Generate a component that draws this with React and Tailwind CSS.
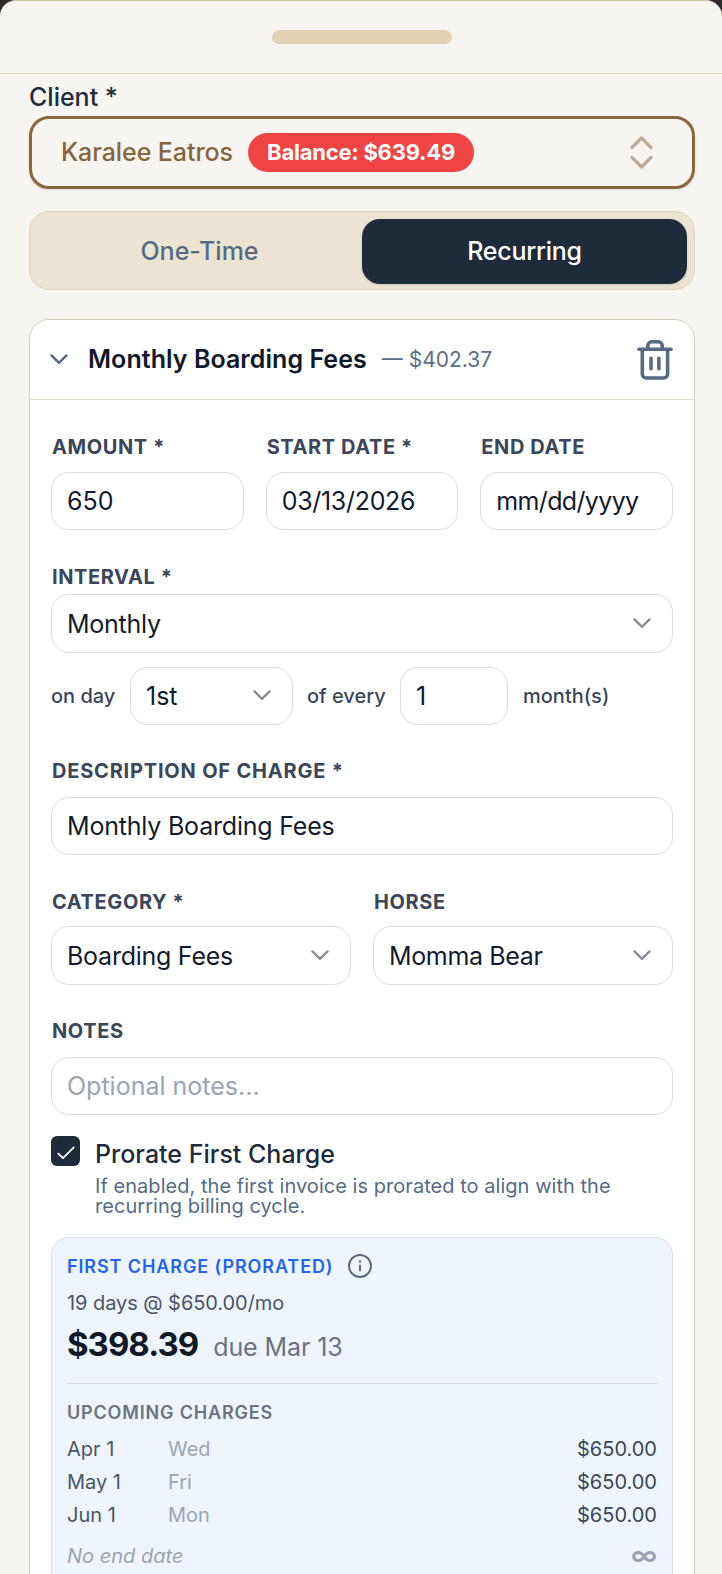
import React from 'react';

const upcoming = [
  { date: 'Apr 1', day: 'Wed', amount: '$650.00' },
  { date: 'May 1', day: 'Fri', amount: '$650.00' },
  { date: 'Jun 1', day: 'Mon', amount: '$650.00' },
];

const Chevron = ({ className = 'text-[#8a8f9b]' }) => (
  <svg width="18" height="12" viewBox="0 0 18 12" fill="none" stroke="currentColor" strokeWidth="2.4" strokeLinecap="round" strokeLinejoin="round" className={className}>
    <path d="M1.5 1.4 9 8.9l7.5-7.5" />
  </svg>
);

const Label = ({ children, className = 'tracking-[0.03em]' }) => (
  <div className={`h-[30px] whitespace-nowrap pl-px text-[20px] font-bold uppercase leading-[30px] text-[#3b4659] ${className}`}>
    {children}
  </div>
);

const Field = ({ children, select = false, className = '' }) => (
  <div className={`flex items-center justify-between rounded-[18px] border border-[#dcdde3] bg-white pl-[15px] pr-[21px] text-[25px] text-[#131b2c] ${className}`}>
    <span className="whitespace-nowrap pt-[2px]">{children}</span>
    {select && <Chevron />}
  </div>
);

const ClientSelect = () => (
  <div className="flex h-[73px] items-center rounded-[20px] border-[3px] border-[#89673c] pl-[29px] pr-[39px] shadow-sm">
    <span className="w-[171px] whitespace-nowrap pt-px text-[25px] font-[550] tracking-[-0.003em] text-[#86653a]">Karalee Eatros</span>
    <span className="ml-[16px] flex h-[39px] w-[226px] items-center justify-center whitespace-nowrap rounded-full bg-[#ef4444] text-[22px] font-bold tracking-[-0.01em] text-white">
      Balance: $639.49
    </span>
    <svg width="24" height="34" viewBox="0 0 24 34" fill="none" stroke="#c0ac95" strokeWidth="3.2" strokeLinecap="round" strokeLinejoin="round" className="ml-auto">
      <path d="M3 11.5l9.5-9.5 9.5 9.5M3 21.5l9.5 9.5 9.5-9.5" />
    </svg>
  </div>
);

const TypeToggle = () => (
  <div className="mt-[22px] flex h-[79px] rounded-[20px] border border-[#dfd3bc] bg-[#ebe4d3] p-[7px] text-[25px] font-[550]">
    <div className="flex w-[325px] items-center justify-center pt-[2px] text-[#566b82]">One-Time</div>
    <div className="flex h-[65px] flex-1 items-center justify-center rounded-[18px] bg-[#1f2b3b] pt-px tracking-[-0.01em] text-white shadow-sm">Recurring</div>
  </div>
);

const ChargeHeader = () => (
  <div className="flex h-[80px] items-center border-b border-[#e3dcc9] pl-[20px] pr-[21px]">
    <Chevron className="text-[#566b82]" />
    <span className="ml-[20px] whitespace-nowrap text-[25px] font-semibold tracking-[0.002em] text-[#111829]">Monthly Boarding Fees</span>
    <span className="ml-[15px] whitespace-nowrap text-[21px] text-[#5b6e85]">— $402.37</span>
    <svg width="36" height="40" viewBox="0 0 36 40" fill="none" stroke="#566b82" strokeWidth="3.6" strokeLinecap="round" strokeLinejoin="round" className="ml-auto">
      <path d="M1.9 9.2h32.2M5.3 9.2V34a4 4 0 0 0 4 4h17.3a4 4 0 0 0 4-4V9.2M10.8 8.6V5.8a4 4 0 0 1 4-4h6.4a4 4 0 0 1 4 4v2.8M14 18.3v10.4M21.9 18.3v10.4" />
    </svg>
  </div>
);

const Preview = () => (
  <div className="mt-[21px] h-[400px] rounded-[18px] border border-[#d8dfe9] bg-[#eef5ff] px-[15px]">
    <div className="mt-[13px] flex h-[30px] items-center">
      <span className="whitespace-nowrap text-[18px] font-semibold tracking-[0.05em] text-[#2563eb]">FIRST CHARGE (PRORATED)</span>
      <svg width="24" height="24" viewBox="0 0 24 24" fill="none" stroke="#566b82" strokeWidth="2" strokeLinecap="round" className="ml-[15px]">
        <circle cx="12" cy="12" r="11" />
        <path d="M12 11.5v5" />
        <path d="M12 7.4v.1" strokeWidth="2.4" />
      </svg>
    </div>
    <div className="mt-[7px] h-[30px] whitespace-nowrap text-[20px] leading-[30px] tracking-[-0.003em] text-[#4b5563]">19 days @ $650.00/mo</div>
    <div className="mt-[3px] flex h-[46px] items-baseline">
      <span className="text-[33px] font-bold leading-[46px] tracking-[-0.03em] text-[#111827]">$398.39</span>
      <span className="ml-[15px] text-[25px] tracking-[-0.004em] text-[#6b7280]">due Mar 13</span>
    </div>
    <div className="mt-[16px] border-t border-[#d8dde6]" />
    <div className="mt-[14px] h-[30px] whitespace-nowrap text-[18px] font-semibold leading-[30px] tracking-[0.046em] text-[#6b7280]">UPCOMING CHARGES</div>
    <div className="mt-[4px]">
      {upcoming.map((row) => (
        <div key={row.date} className="flex h-[33px] items-center text-[20px]">
          <span className="w-[101px] text-[#4b5563]">{row.date}</span>
          <span className="text-[#9ca3af]">{row.day}</span>
          <span className="ml-auto text-[#3b4557]">{row.amount}</span>
        </div>
      ))}
    </div>
    <div className="mt-[8px] flex h-[33px] items-center justify-between text-[20px] text-[#9ca3af]">
      <span className="italic">No end date</span>
      <span className="text-[27px] font-semibold leading-[33px]">∞</span>
    </div>
  </div>
);

const App = () => {
  return (
    <div className="h-[1574px] w-[722px] overflow-hidden bg-[#2d2a2b] font-[Inter,sans-serif]">
      <div className="h-full rounded-t-[16px] border-t border-[#d5c6a6] bg-[#f7f5f1]">
        {/* Drag handle */}
        <div className="flex h-[73px] justify-center border-b border-[#d9d1c2] pt-[29px]">
          <div className="ml-[2px] h-[14px] w-[180px] rounded-full bg-[#e2d1b2]" />
        </div>

        <div className="px-[29px]">
          <div className="h-[42px] pt-[4px] text-[25px] font-[550] leading-[38px] text-[#1f2b3b]">Client *</div>
          <div className="w-[666px]">
            <ClientSelect />
            <TypeToggle />

            <div className="mt-[29px] h-[1400px] rounded-[20px] border border-[#d9cfbb] bg-white">
              <ChargeHeader />
              <div className="px-[21px] pt-[32px]">
                <div className="grid grid-cols-3 gap-[22px]">
                  <div>
                    <Label>Amount *</Label>
                    <Field className="mt-[10px] h-[58px]">650</Field>
                  </div>
                  <div>
                    <Label>Start Date *</Label>
                    <Field className="mt-[10px] h-[58px] tracking-[-0.012em]">03/13/2026</Field>
                  </div>
                  <div>
                    <Label>End Date</Label>
                    <Field className="mt-[10px] h-[58px] tracking-[-0.026em]">mm/dd/yyyy</Field>
                  </div>
                </div>

                <Label className="mt-[32px] tracking-[0.03em]">Interval *</Label>
                <Field select className="mt-[2px] h-[59px] tracking-[-0.01em]">Monthly</Field>
                <div className="mt-[14px] flex h-[58px] items-center whitespace-nowrap text-[20px] font-medium text-[#3b4659]">
                  <span className="w-[79px]">on day</span>
                  <Field select className="h-[58px] w-[163px] font-normal">1st</Field>
                  <span className="w-[107px] pl-[14px]">of every</span>
                  <Field className="h-[58px] w-[108px] font-normal">1</Field>
                  <span className="pl-[15px]">month(s)</span>
                </div>

                <Label className="mt-[31px] tracking-[0.04em]">Description of Charge *</Label>
                <Field className="mt-[11px] h-[58px] tracking-[-0.008em]">Monthly Boarding Fees</Field>

                <div className="mt-[32px] grid grid-cols-2 gap-[22px]">
                  <div>
                    <Label>Category *</Label>
                    <Field select className="mt-[9px] h-[59px] tracking-[-0.01em]">Boarding Fees</Field>
                  </div>
                  <div>
                    <Label>Horse</Label>
                    <Field select className="mt-[9px] h-[59px] tracking-[-0.014em]">Momma Bear</Field>
                  </div>
                </div>

                <Label className="mt-[31px] tracking-[0.03em]">Notes</Label>
                <Field className="mt-[11px] h-[58px]">
                  <span className="text-[#98a5b3]">Optional notes...</span>
                </Field>

                <div className="mt-[21px] flex">
                  <div className="flex h-[30px] w-[29px] items-center justify-center rounded-[6px] bg-[#1f2b3b]">
                    <svg width="18" height="14" viewBox="0 0 18 14" fill="none" stroke="white" strokeWidth="1.8" strokeLinecap="round" strokeLinejoin="round" className="mt-[3px]">
                      <path d="M1.3 7.6 6 12.2 16.7 1.3" />
                    </svg>
                  </div>
                  <div className="ml-[15px] whitespace-nowrap">
                    <div className="mt-px h-[34px] text-[25px] font-[550] leading-[34px] text-[#1f2b3b]">Prorate First Charge</div>
                    <div className="mt-[5px] text-[20px] leading-[20px] tracking-[0.002em] text-[#566b82]">
                      If enabled, the first invoice is prorated to align with the<br />recurring billing cycle.
                    </div>
                  </div>
                </div>

                <Preview />
              </div>
            </div>
          </div>
        </div>
      </div>
    </div>
  );
};

export default App;
